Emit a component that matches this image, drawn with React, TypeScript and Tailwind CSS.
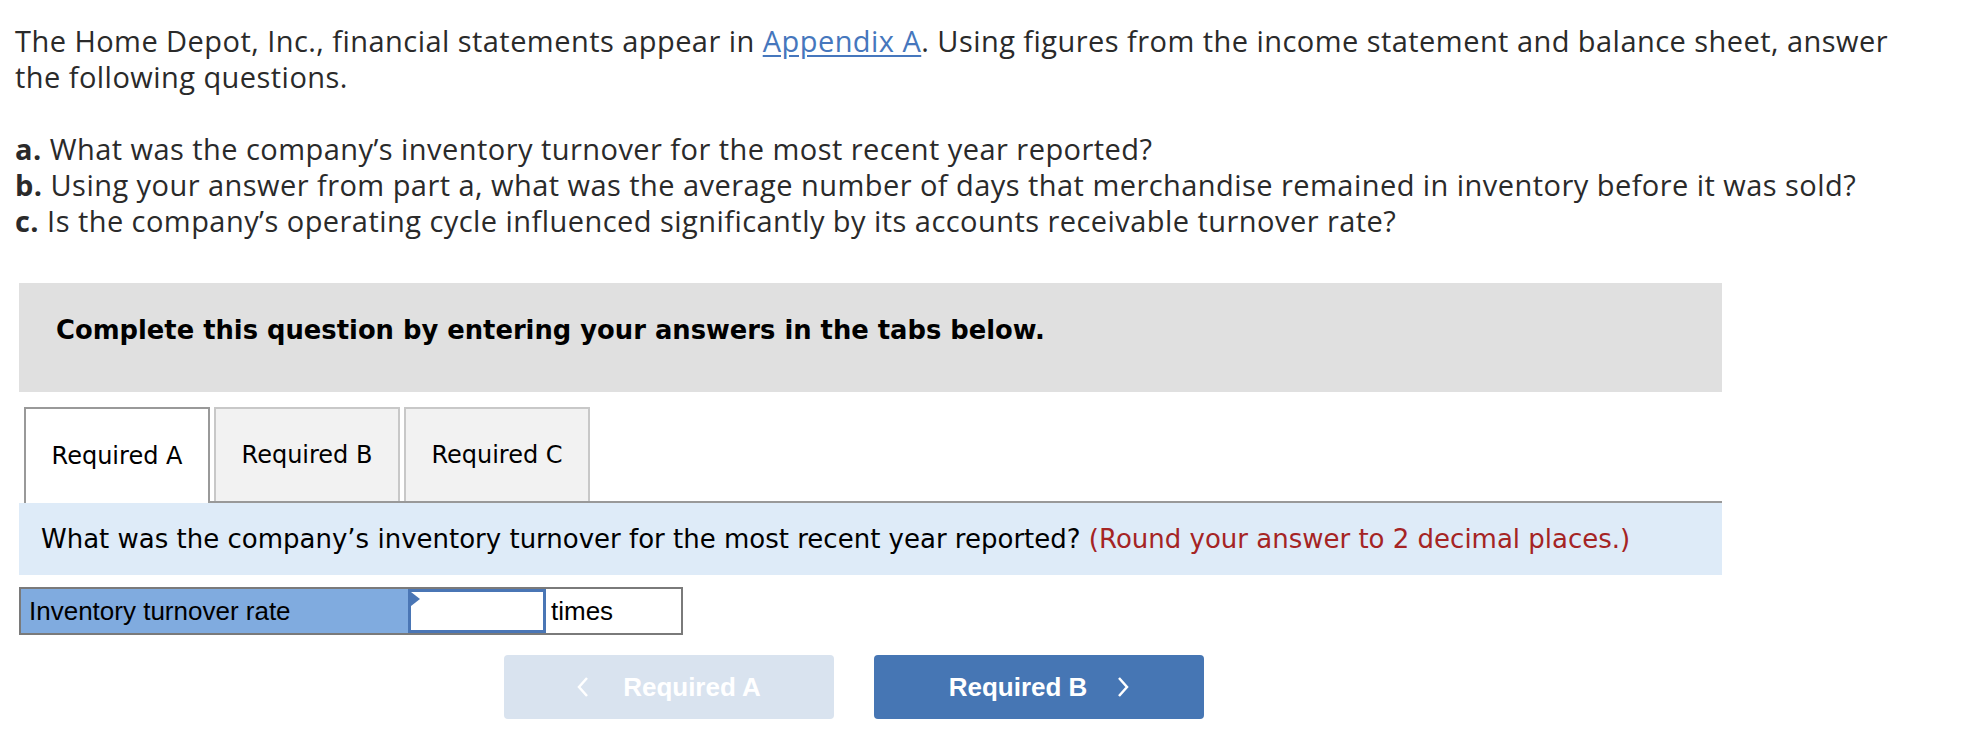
import React from "react";

const body = { fontFamily: "'Open Sans', Lato, sans-serif" };
const verdana = { fontFamily: "'DejaVu Sans', Verdana, sans-serif" };
const arial = { fontFamily: "'Liberation Sans', Arial, sans-serif" };

function Chevron({ dir }: { dir: "left" | "right" }) {
  return (
    <svg width="12" height="22" viewBox="0 0 12 22" className="shrink-0">
      <polyline
        points={dir === "left" ? "10,2 2,11 10,20" : "2,2 10,11 2,20"}
        fill="none"
        stroke="white"
        strokeWidth="2.5"
      />
    </svg>
  );
}

export default function App() {
  return (
    <div className="w-[1966px] h-[740px] overflow-hidden bg-white">
      {/* question text */}
      <div className="pl-[15px] pt-[23px] text-[29px] leading-[36px] tracking-[0.45px] text-[#2a2a2a]" style={body}>
        <p>
          The Home Depot, Inc., financial statements appear in{" "}
          <a href="#" className="text-[#4677bd] underline underline-offset-[3px]">
            Appendix A
          </a>
          . Using figures from the income statement and balance sheet, answer
          <br />
          the following questions.
        </p>
        <p className="mt-[36px]">
          <b>a.</b> What was the company’s inventory turnover for the most recent year reported?
          <br />
          <b>b.</b> Using your answer from part a, what was the average number of days that merchandise remained in inventory before it was sold?
          <br />
          <b>c.</b> Is the company’s operating cycle influenced significantly by its accounts receivable turnover rate?
        </p>
      </div>

      <div className="ml-[19px] w-[1703px] mt-[44px]">
        {/* instructions bar */}
        <div className="h-[109px] bg-[#e0e0e0] pl-[37px] pt-[31px]" style={verdana}>
          <p className="text-[25.8px] leading-[32px] font-bold text-black">
            Complete this question by entering your answers in the tabs below.
          </p>
        </div>

        {/* tabs */}
        <div className="flex items-end mt-[15px] h-[96px]" style={verdana}>
          <div className="w-[5px]" />
          <div className="w-[186px] h-[96px] bg-white border-2 border-b-0 border-[#999] flex items-center justify-center text-[24px] text-black">
            Required A
          </div>
          <div className="flex-1 flex gap-[4px] pl-[4px] border-b-2 border-[#999] h-[96px]">
            <div className="w-[186px] h-[94px] bg-[#f2f2f2] border-2 border-b-0 border-[#c8c8c8] flex items-center justify-center text-[24px] text-black">
              Required B
            </div>
            <div className="w-[186px] h-[94px] bg-[#f2f2f2] border-2 border-b-0 border-[#c8c8c8] flex items-center justify-center text-[24px] text-black">
              Required C
            </div>
          </div>
        </div>

        {/* prompt */}
        <div className="h-[72px] bg-[#deebf8] pl-[22px] flex items-center text-[26px] text-black" style={verdana}>
          <p>
            What was the company’s inventory turnover for the most recent year reported?{" "}
            <span className="text-[#a52424]">(Round your answer to 2 decimal places.)</span>
          </p>
        </div>

        {/* answer row */}
        <div className="mt-[12px] flex w-[664px] h-[48px] border-2 border-[#7a7a7a] text-[26px] text-black" style={arial}>
          <div className="w-[387px] bg-[#80abdf] flex items-center pl-[8px]">Inventory turnover rate</div>
          <div className="relative w-[138px] border-[3px] border-[#4a76b5] bg-white">
            <div className="absolute top-0 left-0 w-0 h-0 border-t-[7px] border-b-[7px] border-l-[9px] border-t-transparent border-b-transparent border-l-[#4a76b5]" />
          </div>
          <div className="flex-1 flex items-center pl-[5px] bg-white">times</div>
        </div>

        {/* nav buttons */}
        <div className="mt-[20px] ml-[485px] flex gap-[40px]" style={arial}>
          <button className="w-[330px] h-[64px] rounded-[4px] bg-[#d9e3ef] flex items-center justify-center gap-[34px] text-white font-bold text-[26px]">
            <Chevron dir="left" />
            <span>Required A</span>
          </button>
          <button className="w-[330px] h-[64px] rounded-[4px] bg-[#4676b4] flex items-center justify-center gap-[30px] text-white font-bold text-[26px]">
            <span>Required B</span>
            <Chevron dir="right" />
          </button>
        </div>
      </div>
    </div>
  );
}
